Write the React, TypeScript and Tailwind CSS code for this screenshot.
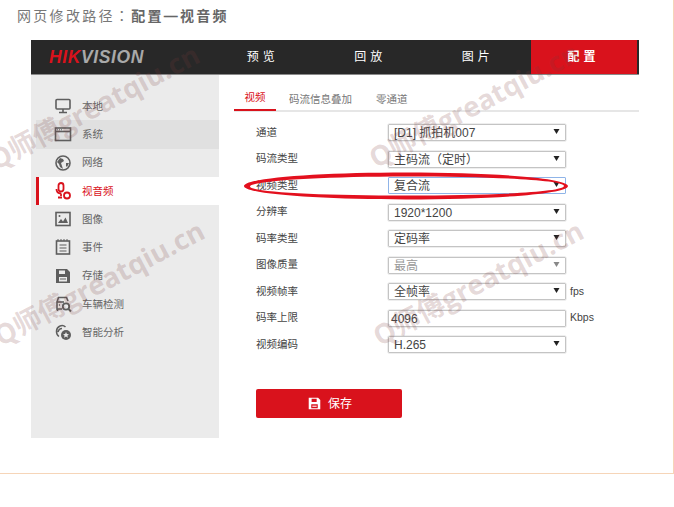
const cjk = "font-['Liberation_Sans','Noto_Sans_CJK_SC',sans-serif]";

const I = ({ children }: { children: React.ReactNode }) => (
  <svg width="18" height="18" viewBox="0 0 18 18" fill="none" stroke="#5e5e5e" strokeWidth="1.6">
    {children}
  </svg>
);

const icons: Record<string, React.ReactNode> = {
  monitor: (
    <I>
      <rect x="2" y="2.500" width="14" height="9.500" rx="1" />
      <path d="M9 12v3M5 15.500h8" />
    </I>
  ),
  system: (
    <I>
      <rect x="1.500" y="3" width="15" height="12.500" />
      <path d="M1.500 6.500h15" />
      <path d="M3 4.800h1M5 4.800h1M7 4.800h1" strokeWidth="1" />
    </I>
  ),
  globe: (
    <I>
      <circle cx="9" cy="9" r="7" />
      <path d="M6 4l3 1 1 2-3 2 1 3 1 3-3-2-1-3-2-2zM12 9l3 0-2 4-1-1z" fill="#5e5e5e" stroke="none" />
    </I>
  ),
  mic: (
    <svg width="18" height="18" viewBox="0 0 18 18" fill="none" stroke="#d9121c" strokeWidth="1.800">
      <rect x="4.500" y="1" width="5" height="8.500" rx="2.500" />
      <path d="M2.500 7c0 3 2 4.500 4.500 4.500M7 11.500V14M4 15.500h4" />
      <circle cx="13" cy="13.500" r="3" />
    </svg>
  ),
  image: (
    <I>
      <rect x="2" y="2.500" width="14" height="13" />
      <path d="M4 13l3-4 2 2.500 2.500-4L14 13z" fill="#5e5e5e" stroke="none" />
      <circle cx="5.500" cy="6" r="1" fill="#5e5e5e" stroke="none" />
    </I>
  ),
  event: (
    <I>
      <rect x="2.500" y="3" width="13" height="13" />
      <path d="M5.500 7h7M5.500 10h7M5.500 13h7" strokeWidth="1.200" />
      <path d="M4 1v2M7 1v2M10 1v2M13 1v2" strokeWidth="1" />
    </I>
  ),
  disk: (
    <svg width="18" height="18" viewBox="0 0 18 18" fill="#5e5e5e">
      <path fillRule="evenodd" d="M2 2h11l3 3v11H2zM5 3.500v3.500h6V3.500zM5 10v4.500h8V10z" />
      <path d="M6 11.500h6v1H6z" />
    </svg>
  ),
  car: (
    <I>
      <path d="M8 14H3V7l1.500-4.500h8L14 6" />
      <path d="M3 7h7" />
      <circle cx="12" cy="11.500" r="3.200" strokeWidth="1.800" />
      <path d="M14.500 14l2.500 2.500" strokeWidth="2" />
      <path d="M3.500 14v2M5 10h1" />
    </I>
  ),
  smart: (
    <svg width="18" height="18" viewBox="0 0 18 18" fill="none" stroke="#5e5e5e" strokeWidth="1.500">
      <path d="M5 13.500C1.500 11 1.500 5 6 3c2-1 4-.5 5.500 1M4 9c.5-2 2-3.500 4-3.500" />
      <circle cx="12" cy="12" r="5" fill="#5e5e5e" stroke="none" />
      <path d="M12 9l.9 2 2.100.2-1.600 1.400.5 2.100-1.900-1.100-1.900 1.100.5-2.100L9 11.200l2.100-.2z" fill="#ebebeb" stroke="none" />
    </svg>
  ),
};

const nav: [string, string][] = [
  ["本地", "monitor"],
  ["系统", "system"],
  ["网络", "globe"],
  ["视音频", "mic"],
  ["图像", "image"],
  ["事件", "event"],
  ["存储", "disk"],
  ["车辆检测", "car"],
  ["智能分析", "smart"],
];

const rows: { label: string; value: string; kind?: string; suffix?: string }[] = [
  { label: "通道", value: "[D1] 抓拍机007" },
  { label: "码流类型", value: "主码流（定时）" },
  { label: "视频类型", value: "复合流", kind: "focus" },
  { label: "分辨率", value: "1920*1200" },
  { label: "码率类型", value: "定码率" },
  { label: "图像质量", value: "最高", kind: "disabled" },
  { label: "视频帧率", value: "全帧率", suffix: "fps" },
  { label: "码率上限", value: "4096", kind: "input", suffix: "Kbps" },
  { label: "视频编码", value: "H.265" },
];

const marks: string[] = [
  "left-[-9px] top-[146px]",
  "left-[371px] top-[144px]",
  "left-[-4px] top-[322px]",
  "left-[375px] top-[322px]",
];

export default function App() {
  return (
    <div className={`relative w-[674px] h-[507px] overflow-hidden bg-white ${cjk}`}>
      <div className="h-[474px] border-b border-r border-[#f6d5b8]">
        <div className="h-[40px] pl-[17px] pt-[5px] text-[14px] leading-[20px] tracking-[2.300px] text-[#777]">
          网页修改路径<span className="font-['Noto_Sans_CJK_TC']">：</span>
          <span className="font-bold text-[#666]">配置—视音频</span>
        </div>

        <div className="ml-[31px] w-[608px]">
          <header className="flex h-[35px] bg-[#282828] border-b border-[#8a8a8a]">
            <div className="w-[177px] pl-[18px] pt-[7px] text-[17.500px] leading-[20px] font-bold italic tracking-[0.600px]">
              <span className="text-[#d9121c]">HIK</span>
              <span className="text-[#a9a9a9]">VISION</span>
            </div>
            {["预览", "回放", "图片"].map((t) => (
              <div
                key={t}
                className="w-[107.500px] pl-[2px] text-center text-[12px] leading-[35px] tracking-[4px] text-white"
              >
                {t}
              </div>
            ))}
            <div className="w-[106px] bg-[#d9121c] text-center text-[12px] leading-[35px] tracking-[4px] font-bold text-white">
              配置
            </div>
          </header>

          <div className="flex">
            <aside className="w-[188px] h-[363px] bg-[#ebebeb] pt-[17px] pl-[5px]">
              {nav.map(([label, icon]) => {
                const active = label === "视音频";
                const hover = label === "系统";
                return (
                  <div
                    key={label}
                    className={`flex items-center h-[28.250px] text-[10.500px] ${
                      active
                        ? "bg-white text-[#d9121c] border-l-[3px] border-[#d9121c] pl-[15px]"
                        : hover
                          ? "bg-[#e0e0e0] text-[#666] pl-[18px]"
                          : "text-[#666] pl-[18px]"
                    }`}
                  >
                    <span className="w-[28px] flex">{icons[icon]}</span>
                    <span className="pt-[1px]">{label}</span>
                  </div>
                );
              })}
            </aside>

            <main className="flex-1 pl-[15px]">
              <div className="flex h-[37px] border-b-2 border-[#e6e6e6] text-[10.500px]">
                <div className="w-[42px] h-[36px] border-b-2 border-[#d9121c] text-center leading-[45px] text-[#d9121c]">
                  视频
                </div>
                <div className="ml-[13px] leading-[49px] text-[#777]">码流信息叠加</div>
                <div className="ml-[24px] leading-[49px] text-[#777]">零通道</div>
              </div>

              <div className="pl-[22px] pt-[7.500px]">
                {rows.map((r) => (
                  <div key={r.label} className="flex items-center h-[26.500px]">
                    <span className="w-[132px] text-[10.500px] text-[#444]">{r.label}</span>
                    <div
                      className={`relative w-[178px] h-[17px] rounded-[1px] border pl-[5px] text-[12px] leading-[16px] ${
                        r.kind === "focus" ? "border-[#8fb4e8]" : "border-[#c4c4c4] shadow-[0_0_0_0.500px_#ddd]"
                      } ${r.kind === "disabled" ? "text-[#999]" : "text-[#444]"} ${
                        r.kind === "input" ? "!pl-[2px]" : ""
                      }`}
                    >
                      {r.value}
                      {r.kind !== "input" && (
                        <svg className="absolute right-[5px] top-[3px]" width="7" height="7" viewBox="0 0 7 7">
                          <path d="M0.500 1h6L3.500 6z" fill={r.kind === "disabled" ? "#888" : "#222"} />
                        </svg>
                      )}
                    </div>
                    {r.suffix && <span className="ml-[4px] text-[10.500px] text-[#444]">{r.suffix}</span>}
                  </div>
                ))}

                <button className="mt-[31px] flex items-center justify-center gap-[7px] pl-[2px] w-[146px] h-[29px] rounded-[2px] bg-[#d9121c] text-[12px] text-white">
                  <svg width="13" height="13" viewBox="0 0 18 18" fill="#fff">
                    <path fillRule="evenodd" d="M1 1h13l3 3v13H1zM5 2.500v4.500h7V2.500zM4.500 10v5.500h9V10z" />
                    <path d="M6 12h6v1.500H6z" />
                  </svg>
                  保存
                </button>
              </div>
            </main>
          </div>
        </div>
      </div>

      <svg className="absolute left-[240px] top-[168px]" width="334" height="36" viewBox="0 0 334 36">
        <path
          fillRule="evenodd"
          fill="#e3101e"
          d="M4 18C4 10 78 4.500 166 4.500S328 10 328 18 254 31.500 166 31.500 4 26 4 18ZM10 18.500C10 24 80 27.500 166 27.500S324 24 324 18 252 8.500 166 8.500 10 13 10 18.500Z"
        />
      </svg>

      {marks.map((m) => (
        <div
          key={m}
          className={`absolute ${m} origin-left rotate-[-28deg] whitespace-nowrap text-[27.500px] leading-[32px] font-bold text-[#7a3c3c]/20 font-['Open_Sans','Noto_Sans_CJK_SC',sans-serif]`}
        >
          Q师傅greatqiu.cn
        </div>
      ))}
    </div>
  );
}
